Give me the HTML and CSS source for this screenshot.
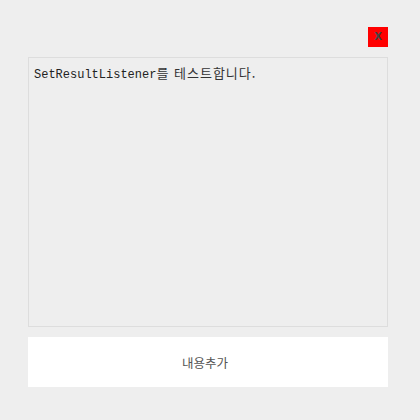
FILE: index.html
```html
<!DOCTYPE html>
<html lang="ko">
<head>
<meta charset="utf-8">
<link rel="stylesheet" href="styles.css">
</head>
<body>
<div class="panel">
  <div class="top">
    <button class="close" type="button">X</button>
  </div>
  <div class="memo" role="textbox" aria-multiline="true"><span class="latin">SetResultListener</span><span class="hangul">를 테스트합니다.</span></div>
  <button class="add" type="button">내용추가</button>
</div>
</body>
</html>
```

FILE: styles.css
```css
html, body {
  margin: 0;
  padding: 0;
  background: #eeeeee;
}
body {
  width: 420px;
  height: 420px;
}
.panel {
  padding: 27px 32px 0 28px;
  display: flex;
  flex-direction: column;
  gap: 10px;
}
.top {
  display: flex;
  justify-content: flex-end;
}
.close {
  width: 20px;
  height: 20px;
  margin: 0;
  padding: 0;
  border: none;
  background: #ff0000;
  color: #444444;
  font-family: "DejaVu Sans", sans-serif;
  font-size: 10px;
  font-weight: bold;
  line-height: 20px;
  text-align: center;
}
.memo {
  box-sizing: border-box;
  width: 360px;
  height: 270px;
  margin: 0;
  padding: 6px 5px;
  border: 1px solid #dddddd;
  background: #eeeeee;
  color: #222222;
  font-family: "Liberation Mono", monospace;
  font-size: 12px;
  line-height: 17px;
  white-space: pre-wrap;
}
.hangul {
  font-family: "Noto Sans CJK KR", sans-serif;
  font-size: 13px;
  letter-spacing: 1px;
  color: #333333;
}
.add {
  box-sizing: border-box;
  width: 360px;
  height: 50px;
  margin: 0;
  padding: 0 6px 0 0;
  border: none;
  background: #ffffff;
  color: #555555;
  font-family: "Noto Sans CJK KR", sans-serif;
  font-size: 12.5px;
}
```
